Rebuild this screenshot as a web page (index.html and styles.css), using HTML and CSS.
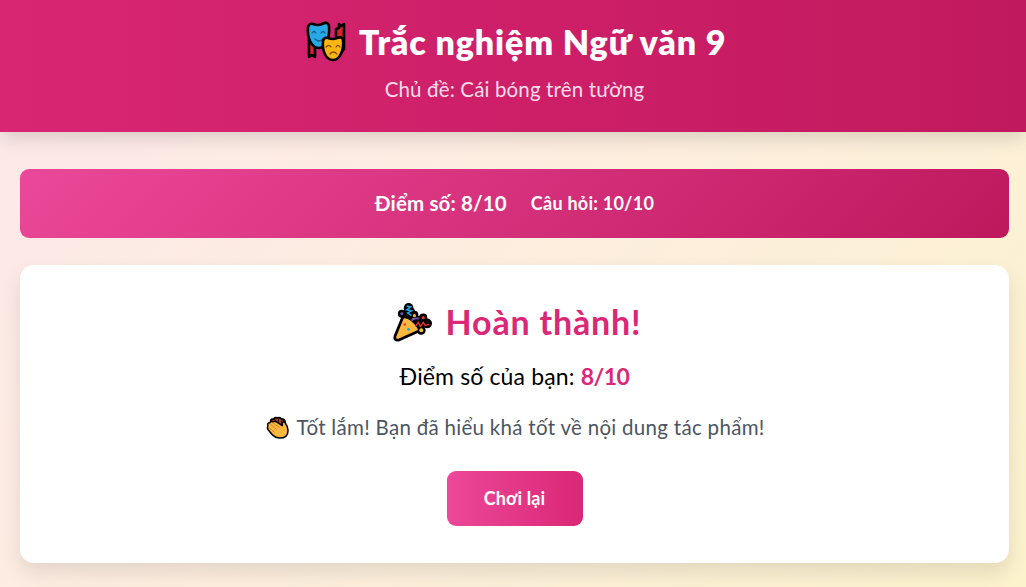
FILE: index.html
```
<!DOCTYPE html>
<html lang="vi">
<head>
  <meta charset="UTF-8" />
  <meta name="viewport" content="width=device-width, initial-scale=1.0">
  <title>Trắc nghiệm Ngữ văn 9</title>
  <link rel="stylesheet" href="styles.css">
</head>
<body>
  <header class="page-header">
    <h1>
      <svg class="icon-masks" viewBox="0 0 40 40" aria-hidden="true">
        <path d="M30 18V7l3-1V2l2 2 3-2v25l-3 4" fill="#d9252a" stroke="#000" stroke-width="2.6" stroke-linejoin="round"/>
        <path d="M3 16v19l3-2 3 2V20" fill="#d9252a" stroke="#000" stroke-width="2.6" stroke-linejoin="round"/>
        <path d="M2 5q1-4 5-3 5 2 9 0 6-3 7 2c1 11-3 22-10 22C5 26 1 15 2 5z" fill="#27a9e8" stroke="#000" stroke-width="2.6" stroke-linejoin="round"/>
        <path d="M6 11q2-3 4 0m5 0q2-3 4 0M9 17q4 4 8 0" fill="none" stroke="#14608b" stroke-width="1.3" stroke-linecap="round"/>
        <path d="M17 19q1-4 5-3 5 2 9 0 5-2 6 2c1 10-3 20-10 20s-11-9-10-19z" fill="#fcb614" stroke="#000" stroke-width="2.6" stroke-linejoin="round"/>
        <path d="M20 25q3-3 5 0m5 0q2-3 4 0M24 32q3-4 7 0" fill="none" stroke="#8a4b0c" stroke-width="1.3" stroke-linecap="round"/>
      </svg>
      <span>Trắc nghiệm Ngữ văn 9</span>
    </h1>
    <p><span>Chủ đề: Cái bóng trên tường</span></p>
  </header>

  <main class="container">
    <div class="score-bar">
      <span class="score">Điểm số: 8/10</span>
      <span class="question">Câu hỏi: 10/10</span>
    </div>

    <section class="result-card">
      <h2>
        <svg class="icon-party" viewBox="0 0 40 40" aria-hidden="true">
          <g fill="#000">
            <circle cx="9" cy="11" r="4"/>
            <circle cx="16" cy="5" r="5"/>
            <circle cx="17" cy="10" r="6"/>
            <circle cx="22" cy="12" r="4"/>
            <circle cx="31" cy="15" r="4.2"/>
            <circle cx="27" cy="20" r="7"/>
            <circle cx="35" cy="21" r="5"/>
            <circle cx="29" cy="28" r="4.5"/>
          </g>
          <path d="M12 14q-2 0-3 3L2 34q-1 5 4 4l20-9q2-2 0-4-5-9-14-11z" fill="#fcb83f" stroke="#000" stroke-width="2.8" stroke-linejoin="round"/>
          <path d="M14 3l4 1-4 3 5 1-4 2 4 3" fill="none" stroke="#27a9e8" stroke-width="1.5"/>
          <path d="M23 24l3-4 2 4 3-4 2 3 4-1" fill="none" stroke="#e8362c" stroke-width="1.4"/>
          <path d="M19 18q3-3 8-2" fill="none" stroke="#7b53b5" stroke-width="1.8"/>
          <circle cx="9" cy="11" r="1.5" fill="#7b53b5"/>
          <circle cx="22" cy="13" r="1.6" fill="#fcb83f"/>
          <circle cx="31" cy="15" r="1.6" fill="#e8362c"/>
          <circle cx="29" cy="28" r="2" fill="#f7c52c"/>
          <circle cx="12" cy="22" r="1.3" fill="#e8362c"/>
          <circle cx="16" cy="27" r="1.4" fill="#23a7b5"/>
        </svg>
        <span>Hoàn thành!</span>
      </h2>
      <p class="final-score"><span>Điểm số của bạn: <strong>8/10</strong></span></p>
      <p class="message">
        <svg class="icon-clap" viewBox="0 0 24 24" aria-hidden="true">
          <path d="M5 7q-1-4 3-4 1-2 4-1 3-1 4 1 4 0 4 4l-2 5H8z" fill="#a8481f" stroke="#000" stroke-width="1.8" stroke-linejoin="round"/>
          <path d="M9 3l1 3M13 3v3M17 4l-1 3" fill="none" stroke="#000" stroke-width="1"/>
          <path d="M2 10q-1-3 2-3 1-2 3-1 2-1 4 0l6 4v-3q2-2 3 0 3 4 3 8 0 8-9 8-4 0-7-3l-5-6q-1-2 0-4z" fill="#fcb83f" stroke="#000" stroke-width="1.6" stroke-linejoin="round"/>
          <path d="M4 8l7 6M7 7l7 5M3 12l6 5" fill="none" stroke="#bb731b" stroke-width=".8"/>
        </svg>
        <span>Tốt lắm! Bạn đã hiểu khá tốt về nội dung tác phẩm!</span>
      </p>
      <button class="btn-replay" type="button"><span>Chơi lại</span></button>
    </section>
  </main>
</body>
</html>
```
FILE: styles.css
```
* {
  box-sizing: border-box;
}
body {
  margin: 0;
  min-height: 100vh;
  font-family: Lato, 'Open Sans', sans-serif;
  background: linear-gradient(135deg, #fce7ea 0%, #fdece2 35%, #fcefd9 65%, #fcf2cc 100%);
  overflow: hidden;
}
h1, h2, p {
  margin: 0;
}
svg {
  flex: none;
  overflow: visible;
}
span {
  white-space: nowrap;
}
.page-header {
  height: 132px;
  padding: 19px 0 0 3px;
  background: linear-gradient(90deg, #d92673, #c1195e);
  box-shadow: 0 9px 16px -2px rgba(0, 0, 0, 0.13);
  color: #fff;
}
.page-header h1 {
  display: flex;
  align-items: center;
  justify-content: center;
  gap: 13px;
  height: 44px;
  padding-left: 3px;
  font-size: 34px;
  font-weight: 800;
  letter-spacing: 0.88px;
}
.icon-masks {
  width: 40px;
  height: 40px;
  margin-top: 2px;
}
.page-header p {
  height: 28px;
  margin-top: 12px;
  line-height: 28px;
  font-size: 20.5px;
  letter-spacing: 0.14px;
  color: #fbdcea;
  text-align: center;
}
.container {
  padding: 37px 17px 0 20px;
}
.score-bar {
  display: flex;
  align-items: center;
  justify-content: center;
  gap: 24px;
  height: 69px;
  padding-bottom: 1px;
  border-radius: 9px;
  background: linear-gradient(135deg, #ec4899, #be185d);
  color: #fff;
  font-weight: 700;
}
.score {
  font-size: 20.5px;
  letter-spacing: 0.14px;
}
.question {
  font-size: 18px;
  letter-spacing: 0.25px;
}
.result-card {
  display: flex;
  flex-direction: column;
  align-items: center;
  height: 298px;
  margin-top: 27px;
  padding-top: 36px;
  border-radius: 14px;
  background: #fff;
  box-shadow: 0 10px 20px rgba(0, 0, 0, 0.1);
}
.result-card h2 {
  display: flex;
  align-items: center;
  gap: 14px;
  height: 42px;
  padding-left: 5px;
  font-size: 34px;
  letter-spacing: 0.82px;
  color: #db2777;
}
.result-card h2 span {
  margin-top: -2px;
}
.icon-party {
  width: 39px;
  height: 39px;
}
.final-score {
  margin-top: 17px;
  height: 32px;
  line-height: 32px;
  font-size: 23px;
  letter-spacing: 0.14px;
}
.final-score strong {
  letter-spacing: -0.5px;
  color: #db2777;
}
.message {
  display: flex;
  align-items: center;
  gap: 7px;
  margin-top: 20px;
  height: 30px;
  padding-left: 2px;
  font-size: 20.5px;
  letter-spacing: 0.3px;
  color: #4b5563;
}
.icon-clap {
  width: 23px;
  height: 23px;
}
.btn-replay {
  width: 136px;
  height: 55px;
  margin-top: 29px;
  padding-bottom: 3px;
  border: none;
  border-radius: 9px;
  background: linear-gradient(90deg, #ec4899, #db2777);
  color: #fff;
  font-family: inherit;
  font-size: 18px;
  font-weight: 700;
  letter-spacing: 0.12px;
  cursor: pointer;
}
```
